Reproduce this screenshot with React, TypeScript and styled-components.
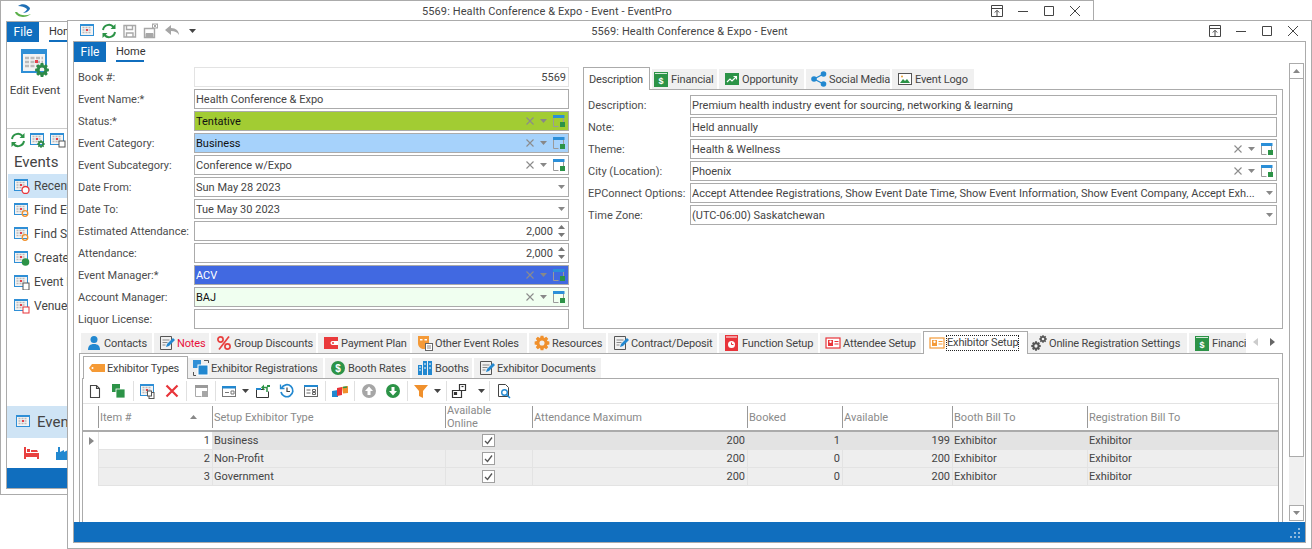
import React from "react";
import styled, { createGlobalStyle } from "styled-components";

const BLUE = "#106ebe";
const LINE = "#ababab";

const GlobalStyle = createGlobalStyle`
  html, body { margin: 0; padding: 0; background: #fff; }
  body { width: 1312px; height: 549px; overflow: hidden; font-family: Roboto, "Noto Sans", sans-serif; font-size: 11px; color: #444; }
  svg { display: block; flex: none; }
`;

/* ---------- icons ---------- */

// 8 toothed gear with a hole, r is the outer radius
const gearPath = (cx: number, cy: number, r: number) => {
  const pts: string[] = [];
  const inner = r * 0.72;
  for (let i = 0; i < 8; i++) {
    const a = (i * Math.PI) / 4;
    const w = Math.PI / 11;
    const add = (rad: number, ang: number) =>
      pts.push(`${(cx + rad * Math.cos(ang)).toFixed(2)} ${(cy + rad * Math.sin(ang)).toFixed(2)}`);
    add(inner, a - w * 1.3);
    add(r, a - w * 0.65);
    add(r, a + w * 0.65);
    add(inner, a + w * 1.3);
  }
  const h = r * 0.34;
  return `M${pts.join("L")}zM${cx - h} ${cy}a${h} ${h} 0 1 0 ${h * 2} 0a${h} ${h} 0 1 0 ${-h * 2} 0z`;
};

const Gear = ({ cx, cy, r, c }: { cx: number; cy: number; r: number; c: string }) => (
  <path d={gearPath(cx, cy, r)} fill={c} fillRule="evenodd" />
);

const CalBase = ({ s = 16, children }: { s?: number; children?: React.ReactNode }) => (
  <svg width={s} height={s} viewBox="0 0 16 16">
    <rect x="0.5" y="1.500" width="13" height="11" fill="#f3f3f3" stroke="#2f8fd6" />
    <rect x="1" y="1" width="12" height="2" fill="#2f8fd6" />
    <path d="M2.500 4.500h9M2.500 7h9M2.500 9.500h9" stroke="#bbb" strokeWidth="1.400" strokeDasharray="2 1" />
    <rect x="6" y="6" width="2" height="2" fill="#e5404a" />
    {children}
  </svg>
);

const Refresh = () => (
  <svg width="16" height="16" viewBox="0 0 16 16" fill="none">
    <path d="M2 7a6 6 0 0 1 10.500-3" stroke="#2c9347" strokeWidth="2" />
    <path d="M14 9a6 6 0 0 1-10.500 3" stroke="#2c9347" strokeWidth="2" />
    <path d="M14.500 1v5h-5zM1.500 15v-5h5z" fill="#2c9347" />
  </svg>
);

const Floppy = ({ x }: { x?: boolean }) => (
  <svg width="16" height="16" viewBox="0 0 16 16" fill="none" stroke="#a8a8a8">
    {x ? (
      <>
        <path d="M1.500 5.500h10v9h-10z" strokeWidth="1.400" />
        <path d="M3 10.500h7v4H3z" fill="#a8a8a8" />
        <rect x="9.500" y="1" width="5" height="4" fill="#fff" />
        <path d="M10.500 1.500l3 3m0-3l-3 3" />
      </>
    ) : (
      <>
        <path d="M2 2.500h11.500v11.500H2z" strokeWidth="1.400" />
        <path d="M4.500 2.500v4h6v-4M4.500 14v-4h6.500v4" strokeWidth="1.400" />
      </>
    )}
  </svg>
);

const Undo = () => (
  <svg width="16" height="16" viewBox="0 0 16 16">
    <path d="M1 7l6-5v3c5 0 8 3 8 7-2-3-4-4-8-4v4z" fill="#a6a6a6" />
  </svg>
);

const Caret = ({ up, c = "#666", left, right }: { up?: boolean; c?: string; left?: boolean; right?: boolean }) => {
  const d = up ? "M0 4L3.500 0 7 4z" : left ? "M5 0v8L0 4z" : right ? "M0 0v8l5-4z" : "M0 0h7L3.500 4z";
  return (
    <svg width={left || right ? 5 : 7} height={left || right ? 8 : 4} viewBox={left || right ? "0 0 5 8" : "0 0 7 4"}>
      <path d={d} fill={c} />
    </svg>
  );
};

const ClearX = () => (
  <svg width="8" height="8" viewBox="0 0 8 8">
    <path d="M.5.500l7 7m0-7l-7 7" stroke="#8c8c8c" strokeWidth="1.100" />
  </svg>
);

const PickBox = () => (
  <svg width="12" height="12" viewBox="0 0 12 12">
    <path d="M.5 1.500h10v6M.5 1.500v10h5" fill="none" stroke="#9a9a9a" />
    <rect width="11.500" height="3" fill="#2b8fd8" />
    <rect x="7" y="7" width="5" height="5" fill="#2c9347" />
  </svg>
);

const WinBtn = ({ kind }: { kind: "restore" | "min" | "max" | "close" }) => (
  <svg width="14" height="14" viewBox="0 0 14 14" fill="none" stroke="#444">
    {kind === "restore" && <path d="M1.500 1.500h11v11h-11zM1.500 4.500h11M7 12V6.500M4.800 8.500L7 6.300l2.200 2.200" />}
    {kind === "min" && <path d="M2 7.500h10" />}
    {kind === "max" && <path d="M2.500 2.500h9v9h-9z" />}
    {kind === "close" && <path d="M2 2l10 10m0-10L2 12" />}
  </svg>
);

const Person = () => (
  <svg width="16" height="16" viewBox="0 0 16 16" fill="#2288d0">
    <circle cx="8" cy="4.500" r="3.500" />
    <path d="M2 15c0-4 2-6 6-6s6 2 6 6z" />
  </svg>
);

const Note = () => (
  <svg width="16" height="16" viewBox="0 0 16 16" fill="none">
    <path d="M1.500 1.500h11v13h-11z" stroke="#555" />
    <path d="M3.500 5h7M3.500 7.500h5M3.500 10h3" stroke="#888" />
    <path d="M7 12l1-3 6-6 2 2-6 6z" fill="#2288d0" />
  </svg>
);

const PercentIcon = () => (
  <svg width="16" height="16" viewBox="0 0 16 16" fill="none" stroke="#e8403f" strokeWidth="1.700">
    <circle cx="4.500" cy="4.500" r="2.600" />
    <circle cx="11.500" cy="11.500" r="2.600" />
    <path d="M13 1.500L3 14.500" />
  </svg>
);

const Wallet = () => (
  <svg width="16" height="16" viewBox="0 0 16 16">
    <rect x="1" y="2" width="14" height="12" fill="#ea3a3c" />
    <path d="M15 6H9.500a2 2 0 0 0 0 4H15" fill="#fff" />
    <circle cx="10" cy="8" r="1" fill="#ea3a3c" />
  </svg>
);

const Masks = () => (
  <svg width="16" height="16" viewBox="0 0 16 16">
    <path d="M1 1h11v7c0 4-2 6-5 6s-6-2-6-6z" fill="#f49a38" />
    <rect x="3" y="4" width="2.500" height="1.500" fill="#fff" />
    <rect x="7.500" y="4" width="2.500" height="1.500" fill="#fff" />
    <rect x="8.500" y="8.500" width="7" height="7" fill="#fff" stroke="#666" />
    <path d="M10 11h4M10 13h4" stroke="#888" />
  </svg>
);

const GearIcon = () => (
  <svg width="16" height="16" viewBox="0 0 16 16">
    <Gear cx={8} cy={8} r={7.500} c="#f0902c" />
  </svg>
);

const Gears = () => (
  <svg width="16" height="16" viewBox="0 0 16 16">
    <Gear cx={5} cy={11} r={4.800} c="#555" />
    <Gear cx={12} cy={4} r={3.800} c="#555" />
  </svg>
);

const FuncIcon = () => (
  <svg width="16" height="16" viewBox="0 0 16 16" fill="none">
    <rect x="1" y="0" width="13" height="16" fill="#e8343a" />
    <path d="M2 2h11" stroke="#fff" />
    <circle cx="7.500" cy="9.500" r="3.500" fill="#fff" />
    <path d="M7.500 7.500v2h2" stroke="#e8343a" />
  </svg>
);

const IdCard = ({ c }: { c: string }) => (
  <svg width="16" height="16" viewBox="0 0 16 16">
    <rect x="1" y="3" width="14" height="10" fill="#fff" stroke={c} strokeWidth="1.200" />
    <rect x="3" y="5" width="5" height="6" fill={c} />
    <circle cx="5.500" cy="6.800" r="1.200" fill="#fff" />
    <path d="M9.500 6.500h4M9.500 9h4" stroke={c} />
  </svg>
);

const Ledger = () => (
  <svg width="16" height="16" viewBox="0 0 16 16">
    <rect x="1" y="1" width="14" height="15" fill="#2c9347" />
    <path d="M2 2.500h12" stroke="#fff" strokeWidth=".8" />
    <text x="8" y="13" fontSize="9" fontWeight="700" textAnchor="middle" fill="#fff" fontFamily="Liberation Sans">$</text>
  </svg>
);

const Trend = () => (
  <svg width="16" height="16" viewBox="0 0 16 16" fill="none">
    <rect x="1" y="2" width="14" height="12" fill="#2c9347" />
    <path d="M3 11l3-3 2 2 4-4M9.500 5.500H12.500V8.500" stroke="#fff" strokeWidth="1.100" />
  </svg>
);

const Share = () => (
  <svg width="16" height="16" viewBox="0 0 16 16" fill="#2288d0">
    <circle cx="12.500" cy="3" r="2.800" />
    <circle cx="12.500" cy="13" r="2.800" />
    <circle cx="3" cy="8" r="2.800" />
    <path d="M3 8l9.500-5M3 8l9.500 5" stroke="#2288d0" strokeWidth="1.400" />
  </svg>
);

const Picture = () => (
  <svg width="16" height="16" viewBox="0 0 16 16">
    <rect x="1.500" y="2.500" width="13" height="11" fill="#fff" stroke="#555" />
    <path d="M3 12l3-4 2 2 2-2 3 4z" fill="#2c9347" />
    <circle cx="5" cy="5.500" r="1" fill="#e8a030" />
  </svg>
);

const Tag = () => (
  <svg width="16" height="16" viewBox="0 0 16 16">
    <path d="M0 8l3-4h13v8H3z" fill="#f59a35" />
    <circle cx="3.500" cy="8" r="1" fill="#fff" />
  </svg>
);

const Stack = () => (
  <svg width="16" height="16" viewBox="0 0 16 16" fill="none">
    <rect x="0" y="0" width="8" height="8" fill="#2f8fd6" />
    <rect x="5" y="5" width="10" height="10" fill="#2288d0" stroke="#fff" />
    <path d="M11 .500h4.500V3M.500 12v3.500H3" stroke="#555" />
  </svg>
);

const DollarRound = () => (
  <svg width="16" height="16" viewBox="0 0 16 16">
    <circle cx="8" cy="8" r="7" fill="#2c9347" />
    <text x="8" y="11.500" fontSize="10" fontWeight="700" textAnchor="middle" fill="#fff" fontFamily="Liberation Sans">$</text>
  </svg>
);

const Booths = () => (
  <svg width="16" height="16" viewBox="0 0 16 16" fill="#2288d0">
    <rect x="1" y="5" width="4" height="10" />
    <rect x="6" y="1" width="4" height="14" />
    <rect x="11" y="1" width="4" height="14" />
    <path d="M2 7h2M2 10h2M7 4h2M7 8h2M12 4h2M12 8h2" stroke="#fff" />
  </svg>
);

const NewDoc = () => (
  <svg width="16" height="16" viewBox="0 0 16 16" fill="none">
    <path d="M3.500 2.500h6l3 3v9h-9zM9.500 2.500v3h3" stroke="#444" strokeWidth="1.100" />
  </svg>
);

const Dup = () => (
  <svg width="16" height="16" viewBox="0 0 16 16" fill="#2c9347">
    <rect x="1" y="1" width="8" height="8" />
    <rect x="5" y="6" width="9" height="9" stroke="#fff" strokeWidth=".8" />
  </svg>
);

const CalCopy = () => (
  <CalBase>
    <rect x="9" y="9.500" width="5" height="6" fill="#fff" stroke="#555" />
    <rect x="7.500" y="8" width="4" height="5" fill="#fff" stroke="#555" />
  </CalBase>
);

const RedX = () => (
  <svg width="16" height="16" viewBox="0 0 16 16">
    <path d="M2.500 2.500l11 11m0-11l-11 11" stroke="#e8343a" strokeWidth="2.200" />
  </svg>
);

const GreyWin = () => (
  <svg width="16" height="16" viewBox="0 0 16 16">
    <rect x="2" y="2" width="13" height="3" fill="#9a9a9a" />
    <path d="M2.500 5v8.500h6M14.500 5v3" stroke="#aaa" fill="none" />
    <rect x="9" y="8" width="6" height="6" fill="#a6a6a6" />
  </svg>
);

const WinDrop = () => (
  <svg width="16" height="16" viewBox="0 0 16 16" fill="none">
    <rect x="1.500" y="3.500" width="13" height="10" stroke="#777" />
    <rect x="1" y="3" width="14" height="2.500" fill="#2288d0" />
    <path d="M4 9.500h4M10 8h3v3h-3z" stroke="#777" />
  </svg>
);

const FolderOut = () => (
  <svg width="16" height="16" viewBox="0 0 16 16" fill="none">
    <path d="M1.500 6.500h8M1.500 6.500v8h12v-6" stroke="#333" />
    <rect x="1" y="5" width="5" height="2" fill="#2288d0" />
    <path d="M12 9V4.500H9" stroke="#2c9347" strokeWidth="1.500" />
    <path d="M9 1.500l-3 3 3 3zM12 2h3v2h-3z" fill="#2c9347" />
  </svg>
);

const History = () => (
  <svg width="16" height="16" viewBox="0 0 16 16" fill="none" stroke="#2288d0" strokeWidth="1.700">
    <path d="M2.500 5a6 6 0 1 1-.5 4" />
    <path d="M1.500 1.500v4h4" strokeWidth="1.300" />
    <path d="M8 4.500V8.500h3" stroke="#444" strokeWidth="1.200" />
  </svg>
);

const LayoutDoc = () => (
  <svg width="16" height="16" viewBox="0 0 16 16" fill="none" stroke="#666">
    <rect x="1.500" y="2.500" width="13" height="11" />
    <rect x="1" y="2" width="14" height="2" fill="#2288d0" stroke="none" />
    <path d="M3.500 7h4M3.500 10h4M9.500 6.500h3v2h-3zM9.500 9.500h3v2h-3z" />
  </svg>
);

const Blocks = () => (
  <svg width="16" height="16" viewBox="0 0 16 16">
    <path d="M0 8l6-1v7H0z" fill="#2288d0" />
    <path d="M5 5l5-1v8l-5 1z" fill="#e8343a" />
    <path d="M10 4l6-1v7l-5 .500z" fill="#f0902c" />
    <path d="M11 4.500l4-.500" stroke="#2c9347" strokeWidth="1.500" />
  </svg>
);

const RoundArrow = ({ c, up }: { c: string; up?: boolean }) => (
  <svg width="16" height="16" viewBox="0 0 16 16">
    <circle cx="8" cy="8" r="7" fill={c} />
    <path d={up ? "M8 3.500L12 8H9.500v4h-3V8H4z" : "M8 12.500L12 8H9.500V4h-3v4H4z"} fill="#fff" />
  </svg>
);

const Funnel = () => (
  <svg width="16" height="16" viewBox="0 0 16 16">
    <path d="M1 2h14L10 8v7l-4-2V8z" fill="#f0902c" />
  </svg>
);

const LayoutOut = () => (
  <svg width="16" height="16" viewBox="0 0 16 16" fill="none" stroke="#333" strokeWidth="1.200">
    <path d="M1.500 7.500v7h9v-7zM8.500 7V1.500h6v6H11" />
    <path d="M3.500 9.500h2v2h-2z" fill="#333" />
    <path d="M10.500 3.500h2" />
  </svg>
);

const DocSearch = () => (
  <svg width="16" height="16" viewBox="0 0 16 16" fill="none">
    <path d="M2.500 1.500h7l3 3v9h-10z" stroke="#444" />
    <circle cx="8.500" cy="9.500" r="2.800" stroke="#2288d0" strokeWidth="1.400" />
    <path d="M10.500 11.500l3.500 3.500" stroke="#2288d0" strokeWidth="1.500" />
  </svg>
);

const Grip = () => (
  <svg width="12" height="12" viewBox="0 0 12 12" fill="#8fb9dd">
    <rect x="9" y="1" width="2" height="2" />
    <rect x="5" y="5" width="2" height="2" />
    <rect x="9" y="5" width="2" height="2" />
    <rect x="1" y="9" width="2" height="2" />
    <rect x="5" y="9" width="2" height="2" />
    <rect x="9" y="9" width="2" height="2" />
  </svg>
);

/* ---------- windows ---------- */

const Desktop = styled.div`
  position: relative;
  width: 1312px;
  height: 549px;
  overflow: hidden;
  background: #fff;
`;

const Win = styled.div<{ $x: number; $y: number; $w: number; $h: number }>`
  position: absolute;
  left: ${(p) => p.$x}px;
  top: ${(p) => p.$y}px;
  width: ${(p) => p.$w}px;
  height: ${(p) => p.$h}px;
  box-sizing: border-box;
  background: #fff;
  border: 1px solid ${LINE};
  display: flex;
  flex-direction: column;
`;

const TitleBar = styled.div`
  height: 20px;
  flex: none;
  display: grid;
  grid-template-columns: 1fr auto 1fr;
  align-items: center;
  color: #444;
`;

const Title = styled.span`
  letter-spacing: 0.1px;
`;

const Quick = styled.div`
  display: flex;
  align-items: center;
  padding-left: 9px;
`;

const QuickBtn = styled.div`
  width: 21px;
  display: flex;
  justify-content: center;
`;

const QuickCaret = styled.div`
  margin-left: 7px;
`;

const Logo = styled.div`
  margin-left: 2px;
`;

const Controls = styled.div`
  display: flex;
  justify-content: flex-end;
  align-items: center;
  gap: 12px;
  padding-right: 11px;
`;

const Frame = styled.div`
  flex: 1;
  min-height: 0;
  margin: 0 5px 5px;
  border: 1px solid ${LINE};
  display: flex;
  flex-direction: column;
`;

const RibbonTabs = styled.div`
  height: 20px;
  flex: none;
  display: flex;
  align-items: stretch;
`;

const FileTab = styled.div`
  width: 32px;
  background: ${BLUE};
  color: #fff;
  font-size: 12px;
  display: flex;
  align-items: center;
  justify-content: center;
`;

const HomeTab = styled.div`
  margin-left: 10px;
  width: 28px;
  border-bottom: 2px solid ${BLUE};
  box-sizing: border-box;
  text-align: center;
  line-height: 20px;
  height: 20px;
  font-size: 11px;
  color: #333;
`;

const StatusBar = styled.div`
  height: 20px;
  flex: none;
  box-sizing: border-box;
  background: ${BLUE};
  display: flex;
  justify-content: flex-end;
  align-items: flex-end;
  padding: 0 4px 3px 0;
`;

/* ---------- back window sidebar ---------- */

const BackBody = styled.div`
  flex: 1;
  min-height: 0;
  display: flex;
  flex-direction: column;
`;

const Ribbon = styled.div`
  height: 87px;
  flex: none;
  border-bottom: 1px solid #ccc;
  box-sizing: border-box;
  display: flex;
`;

const BigButton = styled.div`
  width: 54px;
  margin-left: 1px;
  padding-top: 7px;
  display: flex;
  flex-direction: column;
  align-items: center;
  gap: 6px;
  white-space: nowrap;
  font-size: 11.500px;
`;

const SideTools = styled.div`
  display: flex;
  gap: 4px;
  padding: 3px 0 0 3px;
  height: 19px;
  flex: none;
`;

const SideHead = styled.div`
  font-size: 15px;
  line-height: 20px;
  padding: 1px 0 2px 7px;
  color: #444;
`;

const SideItem = styled.div<{ $on?: boolean }>`
  height: 24px;
  margin-left: 1px;
  padding-left: 6px;
  display: flex;
  align-items: center;
  gap: 4px;
  white-space: nowrap;
  font-size: 12px;
  background: ${(p) => (p.$on ? "#cde4f7" : "transparent")};
`;

const SideFill = styled.div`
  flex: 1;
`;

const NavBig = styled.div`
  height: 32px;
  flex: none;
  background: #cfe4f5;
  display: flex;
  align-items: center;
  gap: 5px;
  padding-left: 9px;
  font-size: 15px;
`;

const NavIcons = styled.div`
  height: 30px;
  flex: none;
  display: flex;
  align-items: center;
  gap: 16px;
  padding-left: 17px;
`;

/* ---------- form ---------- */

const Body = styled.div`
  flex: 1;
  min-height: 0;
  display: flex;
`;

const Content = styled.div`
  flex: 1;
  min-width: 0;
  display: flex;
  flex-direction: column;
  padding-right: 6px;
`;

const Top = styled.div`
  display: grid;
  grid-template-columns: 491px 700px;
  column-gap: 14px;
  padding: 5px 0 0 4px;
  height: 262px;
  flex: none;
`;

const FormCol = styled.div`
  display: flex;
  flex-direction: column;
  gap: 2px;
`;

const Row = styled.div<{ $label: number }>`
  display: grid;
  grid-template-columns: ${(p) => p.$label}px 1fr;
  align-items: center;
  height: 20px;
  min-width: 0;
`;

const Label = styled.div`
  color: #4d4d4d;
  white-space: nowrap;
`;

const Input = styled.div<{ $bg?: string; $fg?: string; $soft?: boolean }>`
  height: 20px;
  box-sizing: border-box;
  min-width: 0;
  border: 1px solid ${(p) => (p.$soft ? "#e3e3e3" : LINE)};
  background: ${(p) => p.$bg || "#fff"};
  color: ${(p) => p.$fg || "#444"};
  display: flex;
  align-items: center;
  padding: 0 2px 0 1px;
  white-space: nowrap;
`;

const Value = styled.span<{ $right?: boolean }>`
  flex: 1;
  min-width: 0;
  overflow: hidden;
  text-align: ${(p) => (p.$right ? "right" : "left")};
`;

const Trail = styled.div`
  display: flex;
  align-items: center;
  gap: 6px;
  margin-left: 4px;
  padding-right: 1px;
`;

const Spin = styled.div`
  display: flex;
  flex-direction: column;
  gap: 4px;
  margin: 0 1px 0 5px;
`;

/* ---------- tabs ---------- */

const Strip = styled.div<{ $pad?: number }>`
  height: 22px;
  flex: none;
  display: flex;
  align-items: flex-end;
  gap: 2px;
  min-width: 0;
  padding-left: ${(p) => p.$pad || 0}px;
`;

const Tab = styled.div<{ $w: number; $on?: boolean; $hot?: boolean; $pad?: number; $lap?: boolean }>`
  width: ${(p) => p.$w}px;
  flex: none;
  box-sizing: border-box;
  height: ${(p) => (p.$on ? 23 : 20)}px;
  display: flex;
  align-items: center;
  gap: 2px;
  padding-left: ${(p) => p.$pad ?? 5}px;
  white-space: nowrap;
  letter-spacing: -0.15px;
  background: ${(p) => (p.$on ? "#fff" : "#f0f0f0")};
  border: ${(p) => (p.$on ? `1px solid ${LINE}` : "none")};
  border-bottom: none;
  color: ${(p) => (p.$hot ? "#e8103a" : "#444")};
  margin-bottom: ${(p) => (p.$on ? -1 : 0)}px;
  margin-right: ${(p) => (p.$lap ? -2 : 0)}px;
  position: relative;
  z-index: ${(p) => (p.$on ? 1 : 0)};
`;

const Focused = styled.span`
  outline: 1px dotted #222;
  line-height: 14px;
`;

const DescPanel = styled.div`
  flex: 1;
  border: 1px solid ${LINE};
  padding: 5px 5px 0 4px;
  display: flex;
  flex-direction: column;
  gap: 2px;
`;

const RightCol = styled.div`
  display: flex;
  flex-direction: column;
  min-width: 0;
`;

const Bottom = styled.div`
  flex: 1;
  min-height: 0;
  margin: 2px 0 0 5px;
  display: flex;
  flex-direction: column;
`;

const BottomHead = styled.div`
  display: flex;
  align-items: flex-start;
  padding-left: 2px;
  height: 22px;
  flex: none;
`;

const Clip = styled.div`
  width: 1165px;
  overflow: hidden;
  flex: none;
  height: 23px;
  position: relative;
  z-index: 1;
`;

const Pager = styled.div`
  display: flex;
  align-items: center;
  gap: 12px;
  height: 22px;
  padding-left: 7px;
`;

const BottomPanel = styled.div`
  flex: 1;
  min-height: 0;
  border: 1px solid ${LINE};
  border-bottom: none;
  padding: 2px 3px 0 2px;
  display: flex;
  flex-direction: column;
`;

const InnerPanel = styled.div`
  flex: 1;
  min-height: 0;
  border: 1px solid ${LINE};
  border-bottom: none;
  display: flex;
  flex-direction: column;
`;

const Toolbar = styled.div`
  height: 24px;
  flex: none;
  display: flex;
  align-items: center;
  border-bottom: 1px solid #e3e3e3;
`;

const ToolBtn = styled.div<{ $w?: number; $gap?: number }>`
  width: ${(p) => p.$w || 24}px;
  height: 16px;
  display: flex;
  align-items: center;
  justify-content: center;
  gap: ${(p) => p.$gap || 5}px;
`;

const ToolSep = styled.div`
  width: 1px;
  height: 20px;
  background: #e0e0e0;
  margin: 0 2px;
`;

const COLS = "15px 114px 233px 87px 215px 95px 110px 135px 1fr";

const GridRow = styled.div<{ $head?: boolean }>`
  display: grid;
  grid-template-columns: ${COLS};
  grid-template-rows: minmax(0, 1fr);
  height: ${(p) => (p.$head ? 28 : 18)}px;
  flex: none;
  box-sizing: border-box;
  border-bottom: ${(p) => (p.$head ? `2px solid ${LINE}` : "none")};
`;

const HeadCell = styled.div`
  color: #8a8a8a;
  display: flex;
  align-items: center;
  justify-content: space-between;
  line-height: 13px;
  margin: 2px 0;
  padding: 0 15px 0 1px;
  white-space: pre-line;
  border-left: 1px solid #999;
`;

const Cell = styled.div<{ $bg: string; $right?: boolean; $center?: boolean }>`
  background: ${(p) => p.$bg};
  border-left: 1px solid #e3e3e3;
  border-bottom: 1px solid #e3e3e3;
  display: flex;
  align-items: center;
  justify-content: ${(p) => (p.$center ? "center" : p.$right ? "flex-end" : "flex-start")};
  padding: 0 2px 0 1px;
  color: #444;
  overflow: hidden;
  white-space: nowrap;
`;

const Indicator = styled.div`
  display: flex;
  align-items: center;
  padding-left: 6px;
`;

const Check = styled.div`
  width: 13px;
  height: 13px;
  box-sizing: border-box;
  border: 1px solid #a0a0a0;
  background: #fff;
  display: flex;
  align-items: center;
  justify-content: center;
`;

const Scroll = styled.div`
  width: 15px;
  margin: 1px 1px 1px 0;
  display: flex;
  flex-direction: column;
  background: #f0f0f0;
`;

const ScrollBtn = styled.div`
  height: 16px;
  flex: none;
  box-sizing: border-box;
  border: 1px solid ${LINE};
  background: #fff;
  display: flex;
  align-items: center;
  justify-content: center;
`;

const Thumb = styled.div`
  height: 378px;
  flex: none;
  box-sizing: border-box;
  border: 1px solid ${LINE};
  border-top: none;
  background: #fff;
`;

const ScrollFill = styled.div`
  flex: 1;
`;

/* ---------- data ---------- */

const leftRows = [
  { l: "Book #:", v: "5569", right: true, soft: true },
  { l: "Event Name:*", v: "Health Conference & Expo" },
  { l: "Status:*", v: "Tentative", bg: "#a2cc33", fg: "#111", pick: true },
  { l: "Event Category:", v: "Business", bg: "#a6d2fb", fg: "#111", pick: true },
  { l: "Event Subcategory:", v: "Conference w/Expo", pick: true },
  { l: "Date From:", v: "Sun May 28 2023", drop: true },
  { l: "Date To:", v: "Tue May 30 2023", drop: true },
  { l: "Estimated Attendance:", v: "2,000", right: true, spin: true },
  { l: "Attendance:", v: "2,000", right: true, spin: true },
  { l: "Event Manager:*", v: "ACV", bg: "#4169e1", fg: "#fff", pick: true },
  { l: "Account Manager:", v: "BAJ", bg: "#f0fff0", fg: "#111", pick: true },
  { l: "Liquor License:", v: "" },
];

const rightRows = [
  { l: "Description:", v: "Premium health industry event for sourcing, networking & learning" },
  { l: "Note:", v: "Held annually" },
  { l: "Theme:", v: "Health & Wellness", pick: true },
  { l: "City (Location):", v: "Phoenix", pick: true },
  { l: "EPConnect Options:", v: "Accept Attendee Registrations, Show Event Date Time, Show Event Information, Show Event Company, Accept Exh...", drop: true },
  { l: "Time Zone:", v: "(UTC-06:00) Saskatchewan", drop: true },
];

const descTabs = [
  { t: "Financial", w: 65, i: <Ledger />, pad: 1 },
  { t: "Opportunity", w: 85, i: <Trend /> },
  { t: "Social Media", w: 84, i: <Share /> },
  { t: "Event Logo", w: 82, i: <Picture /> },
];

const mainTabs = [
  { t: "Contacts", w: 71, i: <Person /> },
  { t: "Notes", w: 55, i: <Note />, hot: true },
  { t: "Group Discounts", w: 105, i: <PercentIcon /> },
  { t: "Payment Plan", w: 92, i: <Wallet /> },
  { t: "Other Event Roles", w: 115, i: <Masks /> },
  { t: "Resources", w: 77, i: <GearIcon /> },
  { t: "Contract/Deposit", w: 109, i: <Note /> },
  { t: "Function Setup", w: 99, i: <FuncIcon /> },
  { t: "Attendee Setup", w: 101, i: <IdCard c="#e8343a" /> },
  { t: "Exhibitor Setup", w: 105, i: <IdCard c="#f49a38" />, on: true },
  { t: "Online Registration Settings", w: 159, i: <Gears />, pad: 3 },
  { t: "Financial", w: 70, i: <Ledger /> },
];

const subTabs = [
  { t: "Exhibitor Types", w: 105, i: <Tag />, on: true },
  { t: "Exhibitor Registrations", w: 135, i: <Stack /> },
  { t: "Booth Rates", w: 85, i: <DollarRound /> },
  { t: "Booths", w: 60, i: <Booths /> },
  { t: "Exhibitor Documents", w: 127, i: <Note /> },
];

const sideItems = [
  { t: "Recent Events", on: true, b: <circle cx="11.500" cy="12" r="3.500" fill="#fff" stroke="#e8343a" strokeWidth="1.300" /> },
  { t: "Find Events", b: <circle cx="11" cy="11.500" r="2.800" fill="none" stroke="#f0902c" strokeWidth="1.300" /> },
  { t: "Find Space", b: <circle cx="11" cy="11.500" r="2.800" fill="none" stroke="#f0902c" strokeWidth="1.300" /> },
  { t: "Create Event", b: <circle cx="11.500" cy="12" r="3.800" fill="#2c9347" /> },
  { t: "Event List", b: <rect x="9" y="9" width="6" height="7" fill="#fff" stroke="#555" /> },
  { t: "Venue Calendar", b: <rect x="9" y="9" width="6" height="6" fill="#fff" stroke="#e8343a" /> },
];

const grid = [
  { n: "1", t: "Business", max: "200", b: "1", a: "199" },
  { n: "2", t: "Non-Profit", max: "200", b: "0", a: "200" },
  { n: "3", t: "Government", max: "200", b: "0", a: "200" },
];

const heads = ["Item #", "Setup Exhibitor Type", "Available\nOnline", "Attendance Maximum", "Booked", "Available", "Booth Bill To", "Registration Bill To"];

const Field = ({ r, label }: { r: any; label: number }) => (
  <Row $label={label}>
    <Label>{r.l}</Label>
    <Input $bg={r.bg} $fg={r.fg} $soft={r.soft}>
      <Value $right={r.right}>{r.v}</Value>
      {r.pick && (
        <Trail>
          <ClearX />
          <Caret c="#888" />
          <PickBox />
        </Trail>
      )}
      {r.drop && (
        <Trail>
          <Caret c="#888" />
        </Trail>
      )}
      {r.spin && (
        <Spin>
          <Caret up c="#777" />
          <Caret c="#777" />
        </Spin>
      )}
    </Input>
  </Row>
);

const tools: React.ReactNode[] = [
  <ToolBtn key="a"><NewDoc /></ToolBtn>,
  <ToolBtn key="b"><Dup /></ToolBtn>,
  <ToolSep key="s1" />,
  <ToolBtn key="c"><CalCopy /></ToolBtn>,
  <ToolBtn key="d"><RedX /></ToolBtn>,
  <ToolSep key="s2" />,
  <ToolBtn key="e"><GreyWin /></ToolBtn>,
  <ToolSep key="s3" />,
  <ToolBtn key="f" $w={33}><WinDrop /><Caret c="#444" /></ToolBtn>,
  <ToolBtn key="g"><FolderOut /></ToolBtn>,
  <ToolBtn key="h"><History /></ToolBtn>,
  <ToolBtn key="i"><LayoutDoc /></ToolBtn>,
  <ToolSep key="s4" />,
  <ToolBtn key="j"><Blocks /></ToolBtn>,
  <ToolSep key="s5" />,
  <ToolBtn key="k"><RoundArrow c="#a6a6a6" up /></ToolBtn>,
  <ToolBtn key="l"><RoundArrow c="#2c9347" /></ToolBtn>,
  <ToolSep key="s6" />,
  <ToolBtn key="m" $w={34}><Funnel /><Caret c="#444" /></ToolBtn>,
  <ToolSep key="s7" />,
  <ToolBtn key="n" $w={38} $gap={11}><LayoutOut /><Caret c="#444" /></ToolBtn>,
  <ToolSep key="s8" />,
  <ToolBtn key="o"><DocSearch /></ToolBtn>,
];

export default function App() {
  return (
    <Desktop>
      <GlobalStyle />

      <Win $x={0} $y={0} $w={1094} $h={495}>
        <TitleBar>
          <Logo>
            <svg width="32" height="16" viewBox="0 0 32 16">
              <path d="M11 9c1 5 10 7 16 2-5 2-11 2-14-2z" fill="#5bb04a" transform="translate(1 0)" />
              <path d="M15 3c4-3 9-2 12 2 0 2-3 5-7 5 2-1 4-3 4-4-2-2-6-3-9-3z" fill="#1f6fb5" />
            </svg>
          </Logo>
          <Title>5569: Health Conference &amp; Expo - Event - EventPro</Title>
          <Controls>
            <WinBtn kind="restore" />
            <WinBtn kind="min" />
            <WinBtn kind="max" />
            <WinBtn kind="close" />
          </Controls>
        </TitleBar>
        <Frame>
          <RibbonTabs>
            <FileTab>File</FileTab>
            <HomeTab>Home</HomeTab>
          </RibbonTabs>
          <BackBody>
            <Ribbon>
              <BigButton>
                <svg width="28" height="28" viewBox="0 0 28 28">
                  <rect x="1" y="1" width="24" height="22" fill="#f3f3f3" stroke="#2f8fd6" strokeWidth="2" />
                  <rect x="1" y="1" width="24" height="4" fill="#2f8fd6" />
                  <path d="M4 9h18M4 13h18M4 17h18" stroke="#bbb" strokeWidth="2.600" strokeDasharray="4 1.500" />
                  <rect x="14" y="11" width="3" height="3" fill="#e5404a" />
                  <Gear cx={21} cy={21} r={7} c="#2c8a47" />
                </svg>
                <span>Edit Event</span>
              </BigButton>
            </Ribbon>
            <SideTools>
              <Refresh />
              <CalBase>
                <Gear cx={11} cy={12} r={3.800} c="#2c8a47" />
              </CalBase>
              <CalBase>
                <rect x="9" y="9" width="6" height="6" fill="#fff" stroke="#555" />
              </CalBase>
            </SideTools>
            <SideHead>Events</SideHead>
            {sideItems.map((s) => (
              <SideItem key={s.t} $on={s.on}>
                <CalBase>{s.b}</CalBase>
                {s.t}
              </SideItem>
            ))}
            <SideFill />
            <NavBig>
              <CalBase />
              Event Calendar
            </NavBig>
            <NavIcons>
              <svg width="15" height="12" viewBox="0 0 15 12">
                <path d="M0 0h2v6h13v6h-2v-2H2v2H0zM3 2h3v3H3zM7 3h6l1 2H7z" fill="#e8403f" />
              </svg>
              <svg width="15" height="14" viewBox="0 0 15 14">
                <path d="M1 14V6h2V1h2v5l4-2v2l4-2v10z" fill="#2288d0" />
              </svg>
            </NavIcons>
            <StatusBar />
          </BackBody>
        </Frame>
      </Win>

      <Win $x={67} $y={20} $w={1245} $h={529}>
        <TitleBar>
          <Quick>
            <QuickBtn><CalBase /></QuickBtn>
            <QuickBtn><Refresh /></QuickBtn>
            <QuickBtn><Floppy /></QuickBtn>
            <QuickBtn><Floppy x /></QuickBtn>
            <QuickBtn><Undo /></QuickBtn>
            <QuickCaret><Caret c="#444" /></QuickCaret>
          </Quick>
          <Title>5569: Health Conference &amp; Expo - Event</Title>
          <Controls>
            <WinBtn kind="restore" />
            <WinBtn kind="min" />
            <WinBtn kind="max" />
            <WinBtn kind="close" />
          </Controls>
        </TitleBar>
        <Frame>
          <RibbonTabs>
            <FileTab>File</FileTab>
            <HomeTab>Home</HomeTab>
          </RibbonTabs>
          <Body>
            <Content>
              <Top>
                <FormCol>
                  {leftRows.map((r) => (
                    <Field key={r.l} r={r} label={116} />
                  ))}
                </FormCol>
                <RightCol>
                  <Strip>
                    <Tab $w={67} $on>Description</Tab>
                    {descTabs.map((t) => (
                      <Tab key={t.t} $w={t.w} $pad={t.pad}>{t.i}{t.t}</Tab>
                    ))}
                  </Strip>
                  <DescPanel>
                    {rightRows.map((r) => (
                      <Field key={r.l} r={r} label={102} />
                    ))}
                  </DescPanel>
                </RightCol>
              </Top>
              <Bottom>
                <BottomHead>
                  <Clip>
                    <Strip>
                      {mainTabs.map((t) => (
                        <Tab key={t.t} $w={t.w} $on={t.on} $lap={t.on} $hot={t.hot} $pad={t.pad}>
                          {t.i}
                          {t.on ? <Focused>{t.t}</Focused> : t.t}
                        </Tab>
                      ))}
                    </Strip>
                  </Clip>
                  <Pager>
                    <Caret left c="#ccc" />
                    <Caret right c="#666" />
                  </Pager>
                </BottomHead>
                <BottomPanel>
                  <Strip $pad={1}>
                    {subTabs.map((t) => (
                      <Tab key={t.t} $w={t.w} $on={t.on} $lap={t.on}>{t.i}{t.t}</Tab>
                    ))}
                  </Strip>
                  <InnerPanel>
                    <Toolbar>{tools}</Toolbar>
                    <GridRow $head>
                      <span />
                      {heads.map((h, i) => (
                        <HeadCell key={h}>
                          {h}
                          {i === 0 && <Caret up c="#888" />}
                        </HeadCell>
                      ))}
                    </GridRow>
                    {grid.map((g, i) => {
                      const bg = i === 0 ? "#e3e3e3" : "#eeeeee";
                      return (
                        <GridRow key={g.n}>
                          <Indicator>{i === 0 && <Caret right c="#888" />}</Indicator>
                          <Cell $bg={i === 0 ? "#fff" : bg} $right>{g.n}</Cell>
                          <Cell $bg={bg}>{g.t}</Cell>
                          <Cell $bg={bg} $center>
                            <Check>
                              <svg width="9" height="9" viewBox="0 0 9 9">
                                <path d="M1 5l2.500 2.500L8 1.500" fill="none" stroke="#555" strokeWidth="1.300" />
                              </svg>
                            </Check>
                          </Cell>
                          <Cell $bg={bg} $right>{g.max}</Cell>
                          <Cell $bg={bg} $right>{g.b}</Cell>
                          <Cell $bg={bg} $right>{g.a}</Cell>
                          <Cell $bg={bg}>Exhibitor</Cell>
                          <Cell $bg={bg}>Exhibitor</Cell>
                        </GridRow>
                      );
                    })}
                  </InnerPanel>
                </BottomPanel>
              </Bottom>
            </Content>
            <Scroll>
              <ScrollBtn><Caret up c="#888" /></ScrollBtn>
              <Thumb />
              <ScrollFill />
              <ScrollBtn><Caret c="#888" /></ScrollBtn>
            </Scroll>
          </Body>
          <StatusBar><Grip /></StatusBar>
        </Frame>
      </Win>
    </Desktop>
  );
}
